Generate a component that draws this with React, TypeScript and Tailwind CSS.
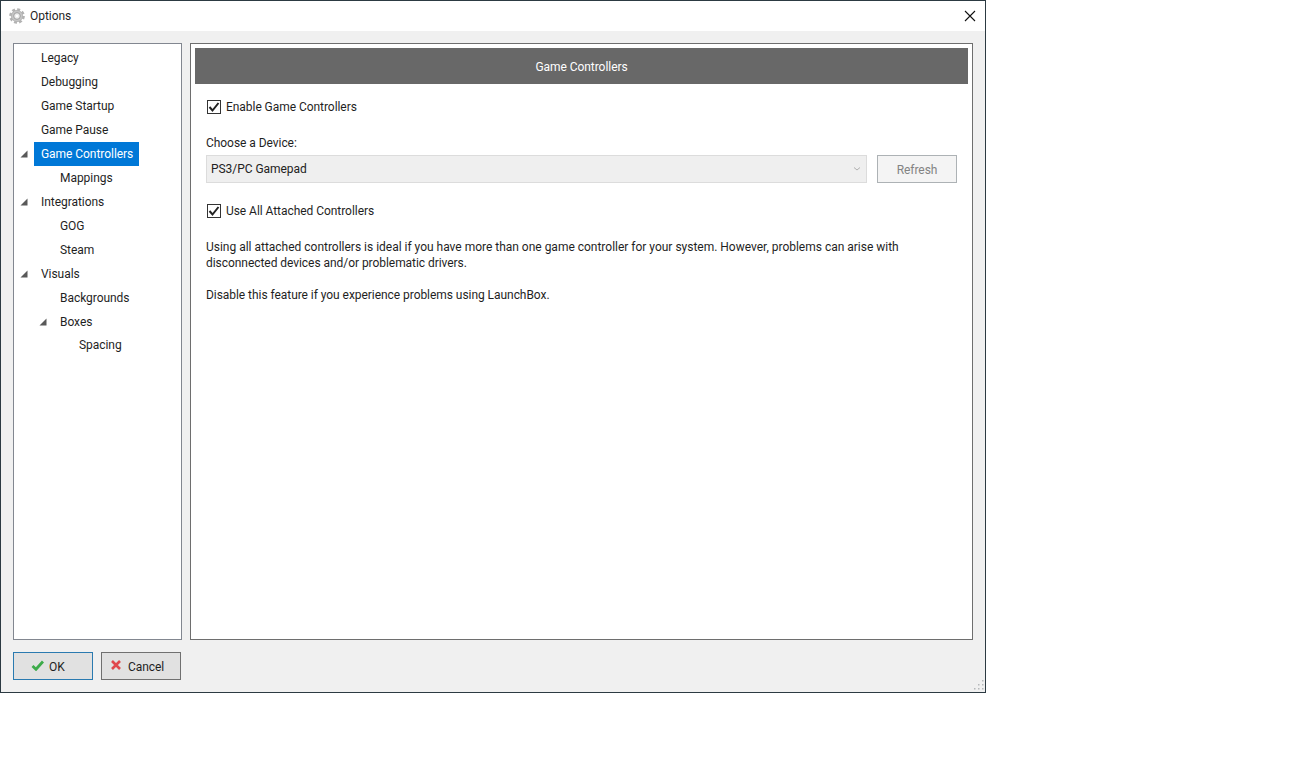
import React from "react";

const font = { fontFamily: 'Roboto, "Open Sans", sans-serif' };

function Arrow() {
  return (
    <svg width="8" height="8" viewBox="0 0 8 8" className="block">
      <path d="M7.500 0.500 V7.500 H0.500 Z" fill="#595959" />
    </svg>
  );
}

function Row({ label, level = 0, arrow, selected, h = "h-[24px]" }: { label: string; level?: number; arrow?: boolean; selected?: boolean; h?: string }) {
  const ml = level === 0 ? "ml-[6px]" : level === 1 ? "ml-[25px]" : "ml-[44px]";
  return (
    <div className={`flex items-center ${h} ${ml}`}>
      <div className="w-[14px] shrink-0">{arrow && <Arrow />}</div>
      <div className={`h-[24px] leading-[24px] pl-[7px] pr-[6px] ${selected ? "bg-[#0078d7] text-white" : "text-[#1f1f1f]"}`}>{label}</div>
    </div>
  );
}

function Check({ label }: { label: string }) {
  return (
    <div className="flex items-center h-[16px]">
      <div className="ml-[1px] w-[14px] h-[14px] border border-[#333333] bg-white flex items-center justify-center shrink-0">
        <svg width="12" height="12" viewBox="0 0 12 12">
          <path d="M1.500 6 L4.500 9.500 L10.500 2" fill="none" stroke="#222222" strokeWidth="2" />
        </svg>
      </div>
      <span className="ml-[5px] text-[#1f1f1f]">{label}</span>
    </div>
  );
}

function Gear() {
  return (
    <svg width="16" height="16" viewBox="0 0 24 24" className="block">
      <circle cx="12" cy="12" r="10" fill="none" stroke="#b2b2b2" strokeWidth="3.500" strokeDasharray="4.500 3.350" />
      <circle cx="12" cy="12" r="8.500" fill="#c6c6c6" stroke="#a6a6a6" strokeWidth="1" />
      <circle cx="12" cy="12" r="5" fill="#ececec" stroke="#a0a0a0" strokeWidth="1.500" />
      <circle cx="12" cy="12" r="2" fill="#ffffff" />
    </svg>
  );
}

function Grip() {
  const dots = [[10, 1], [10, 5], [10, 9], [6, 5], [6, 9], [2, 9]];
  return (
    <svg width="12" height="12" viewBox="0 0 12 12" className="absolute right-[1px] bottom-[1px]">
      {dots.map(([x, y]) => (
        <rect key={`${x}-${y}`} x={x} y={y} width="1.500" height="1.500" fill="#b5b8ba" />
      ))}
    </svg>
  );
}

export default function App() {
  return (
    <div className="w-[1297px] h-[758px] bg-white text-[12px] tracking-[-0.05px]" style={font}>
      <div className="relative w-[986px] h-[693px] border border-[#2c3a42] bg-[#f0f0f0] flex flex-col">
        <div className="h-[30px] bg-white flex items-center shrink-0 pl-[8px] pr-[9px]">
          <Gear />
          <span className="ml-[5px] text-[#1f1f1f]">Options</span>
          <svg width="12" height="12" viewBox="0 0 12 12" className="ml-auto">
            <path d="M1 1 L11 11 M11 1 L1 11" stroke="#111111" strokeWidth="1.100" />
          </svg>
        </div>
        <div className="flex flex-col flex-1 pt-[12px] pl-[12px] pr-[12px]">
          <div className="flex gap-[8px] h-[597px]">
            <div className="w-[169px] border border-[#828790] bg-white pt-[2px] shrink-0">
              <Row label="Legacy" />
              <Row label="Debugging" />
              <Row label="Game Startup" />
              <Row label="Game Pause" />
              <Row label="Game Controllers" arrow selected />
              <Row label="Mappings" level={1} />
              <Row label="Integrations" arrow />
              <Row label="GOG" level={1} />
              <Row label="Steam" level={1} />
              <Row label="Visuals" arrow />
              <Row label="Backgrounds" level={1} />
              <Row label="Boxes" level={1} arrow />
              <Row label="Spacing" level={2} h="h-[22px]" />
            </div>
            <div className="flex-1 border border-[#6e6e6e] bg-white p-[4px]">
              <div className="h-[36px] pt-[1px] bg-[#686868] text-white flex items-center justify-center">Game Controllers</div>
              <div className="pl-[11px] pr-[11px]">
                <div className="mt-[15px]">
                  <Check label="Enable Game Controllers" />
                </div>
                <div className="mt-[20px] h-[16px] leading-[16px] text-[#1f1f1f]">Choose a Device:</div>
                <div className="mt-[4px] flex gap-[10px]">
                  <div className="w-[661px] h-[28px] bg-[#efefef] border border-[#dcdcdc] flex items-center pl-[4px] pr-[5px] text-[#222222]">
                    <span>PS3/PC Gamepad</span>
                    <svg width="8" height="6" viewBox="0 0 8 6" className="ml-auto">
                      <path d="M1 1.500 L4 4 L7 1.500" fill="none" stroke="#b0b0b0" strokeWidth="1" />
                    </svg>
                  </div>
                  <div className="w-[80px] h-[28px] pt-[1px] bg-[#f4f4f4] border border-[#adb2b5] flex items-center justify-center text-[#838383]">Refresh</div>
                </div>
                <div className="mt-[20px]">
                  <Check label="Use All Attached Controllers" />
                </div>
                <div className="mt-[20px] leading-[16px] text-[#1f1f1f] w-[710px]">
                  <span className="tracking-[-0.01px]">Using all attached controllers is ideal if you have more than one game controller for your system. However, problems can arise with</span><br />disconnected devices and/or problematic drivers.
                </div>
                <div className="mt-[16px] leading-[16px] text-[#1f1f1f]">Disable this feature if you experience problems using LaunchBox.</div>
              </div>
            </div>
          </div>
          <div className="flex gap-[8px] mt-[12px]">
            <div className="w-[80px] h-[28px] pt-[1px] bg-[#e1e1e1] border border-[#2a7ab0] flex items-center pl-[17px] text-[#1f1f1f]">
              <svg width="13" height="11" viewBox="0 0 13 11" className="mr-[5px] -mt-[3px]">
                <path d="M1.500 6 L5 9.300 L12 1.500" fill="none" stroke="#3dab4a" strokeWidth="2.800" />
              </svg>
              OK
            </div>
            <div className="w-[80px] h-[28px] pt-[1px] bg-[#e1e1e1] border border-[#707070] flex items-center pl-[8px] text-[#1f1f1f]">
              <svg width="12" height="12" viewBox="0 0 12 12" className="mr-[6px] -mt-[3px]">
                <path d="M2 2 L10 10 M10 2 L2 10" fill="none" stroke="#e0474c" strokeWidth="2.600" />
              </svg>
              Cancel
            </div>
          </div>
        </div>
        <Grip />
      </div>
    </div>
  );
}
